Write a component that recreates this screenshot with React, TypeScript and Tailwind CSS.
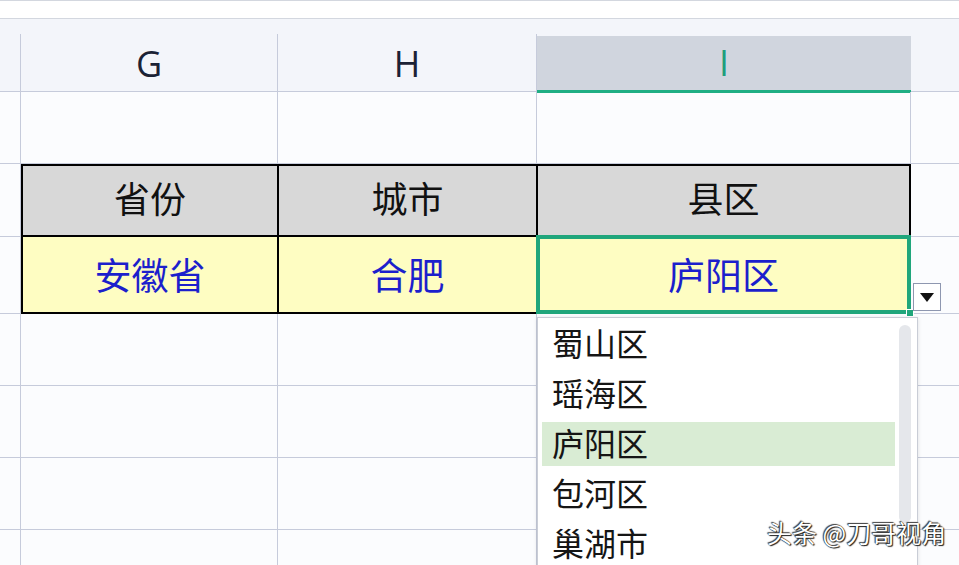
import React from "react";

const cjk = "font-['Noto_Sans_CJK_SC','Noto_Sans',sans-serif]";
const latin = "font-['Open_Sans','Noto_Sans',sans-serif]";

const options = ["蜀山区", "瑶海区", "庐阳区", "包河区", "巢湖市"];

function EmptyRow() {
  return (
    <div className="flex h-[72px] border-b border-[#c6cbdb]">
      <div className="w-[21px] border-r border-[#c6cbdb]" />
      <div className="w-[257px] border-r border-[#c6cbdb]" />
      <div className="w-[259px] border-r border-[#c6cbdb]" />
      <div className="w-[374px] border-r border-[#c6cbdb]" />
      <div className="flex-1" />
    </div>
  );
}

export default function App() {
  return (
    <div className={`relative w-[959px] h-[565px] overflow-hidden bg-[#fbfcfe] ${cjk}`}>
      {/* strip above the sheet */}
      <div className="h-[19px] bg-white border-t border-b border-[#d3d7df]" />
      <div className="h-[15px] bg-[#f3f5fa]" />

      {/* column headers */}
      <div className={`flex h-[58px] bg-[#f3f5fa] border-b border-[#c6cbdb] text-[36px] text-[#1b2235] ${latin}`}>
        <div className="w-[21px] border-r border-[#c6cbdb]" />
        <div className="w-[257px] border-r border-[#c6cbdb] flex items-center justify-center leading-none pt-[2px]">G</div>
        <div className="w-[259px] border-r border-[#c6cbdb] flex items-center justify-center leading-none pt-[2px]">H</div>
        <div className="w-[374px] mt-[2px] bg-[#d0d5de] border-b-[3px] border-[#1fae84] flex items-center justify-center leading-none text-[#1f9f7c] -mb-[2px]">
          I
        </div>
        <div className="flex-1" />
      </div>

      <EmptyRow />

      {/* the table */}
      <div className="flex">
        <div className="w-[21px] border-r border-[#c6cbdb]">
          <div className="h-[73px] border-b border-[#c6cbdb]" />
          <div className="h-[77px] border-b border-[#c6cbdb]" />
        </div>
        <div className="w-[890px] border-2 border-black">
          <div className="flex h-[71px] border-b-2 border-black bg-[#d8d8d8] text-[36px] text-[#111]">
            <div className="w-[256px] border-r-2 border-black flex items-center justify-center leading-none pb-[8px]">省份</div>
            <div className="w-[259px] border-r-2 border-black flex items-center justify-center leading-none pb-[8px]">城市</div>
            <div className="flex-1 flex items-center justify-center leading-none pb-[8px]">县区</div>
          </div>
          <div className="flex h-[75px] bg-[#fefdc2] text-[37px] text-[#1c1fcc]">
            <div className="w-[256px] border-r-2 border-black flex items-center justify-center leading-none">安徽省</div>
            <div className="w-[259px] border-r-2 border-black flex items-center justify-center leading-none">合肥</div>
            <div className="relative flex-1 flex items-center justify-center leading-none">
              庐阳区
              <div className="absolute -inset-[2px] border-4 border-[#20a67b]" />
              <div className="absolute -right-[5px] -bottom-[5px] w-[8px] h-[8px] bg-[#20a67b] border border-white" />
            </div>
          </div>
        </div>
        <div className="flex-1">
          <div className="h-[73px] border-b border-[#c6cbdb]" />
          <div className="h-[77px] border-b border-[#c6cbdb]" />
        </div>
      </div>

      <EmptyRow />
      <EmptyRow />
      <EmptyRow />
      <EmptyRow />

      {/* dropdown arrow button */}
      <div className="absolute left-[913px] top-[283px] w-[28px] h-[28px] bg-white border border-[#8e97b0] flex items-center justify-center">
        <svg width="14" height="9" viewBox="0 0 14 9">
          <path d="M0 0 L14 0 L7 9 Z" fill="#111" />
        </svg>
      </div>

      {/* dropdown list */}
      <div className="absolute left-[537px] top-[317px] w-[381px] h-[260px] bg-white border border-[#c9cdd6] shadow-[0_1px_4px_rgba(0,0,0,0.12)] flex items-start">
        <div className="ml-[4px] mt-[4px] w-[353px] flex flex-col gap-[6px]">
          {options.map((o, i) => (
            <div
              key={o}
              className={`h-[44px] pl-[10px] pb-[5px] flex items-center text-[32px] leading-none text-[#151515] ${
                i === 2 ? "bg-[#d9ecd4]" : ""
              }`}
            >
              {o}
            </div>
          ))}
        </div>
        <div className="ml-[4px] mt-[7px] w-[12px] h-[198px] rounded-full bg-[#e5e7eb]" />
      </div>

      {/* watermark */}
      <div className="absolute left-[767px] top-[520px] text-[25px] leading-none text-white [text-shadow:0_0_1px_#000,1px_1px_1px_#222,-1px_-1px_1px_#444]">
        头条 @刀哥视角
      </div>
    </div>
  );
}
